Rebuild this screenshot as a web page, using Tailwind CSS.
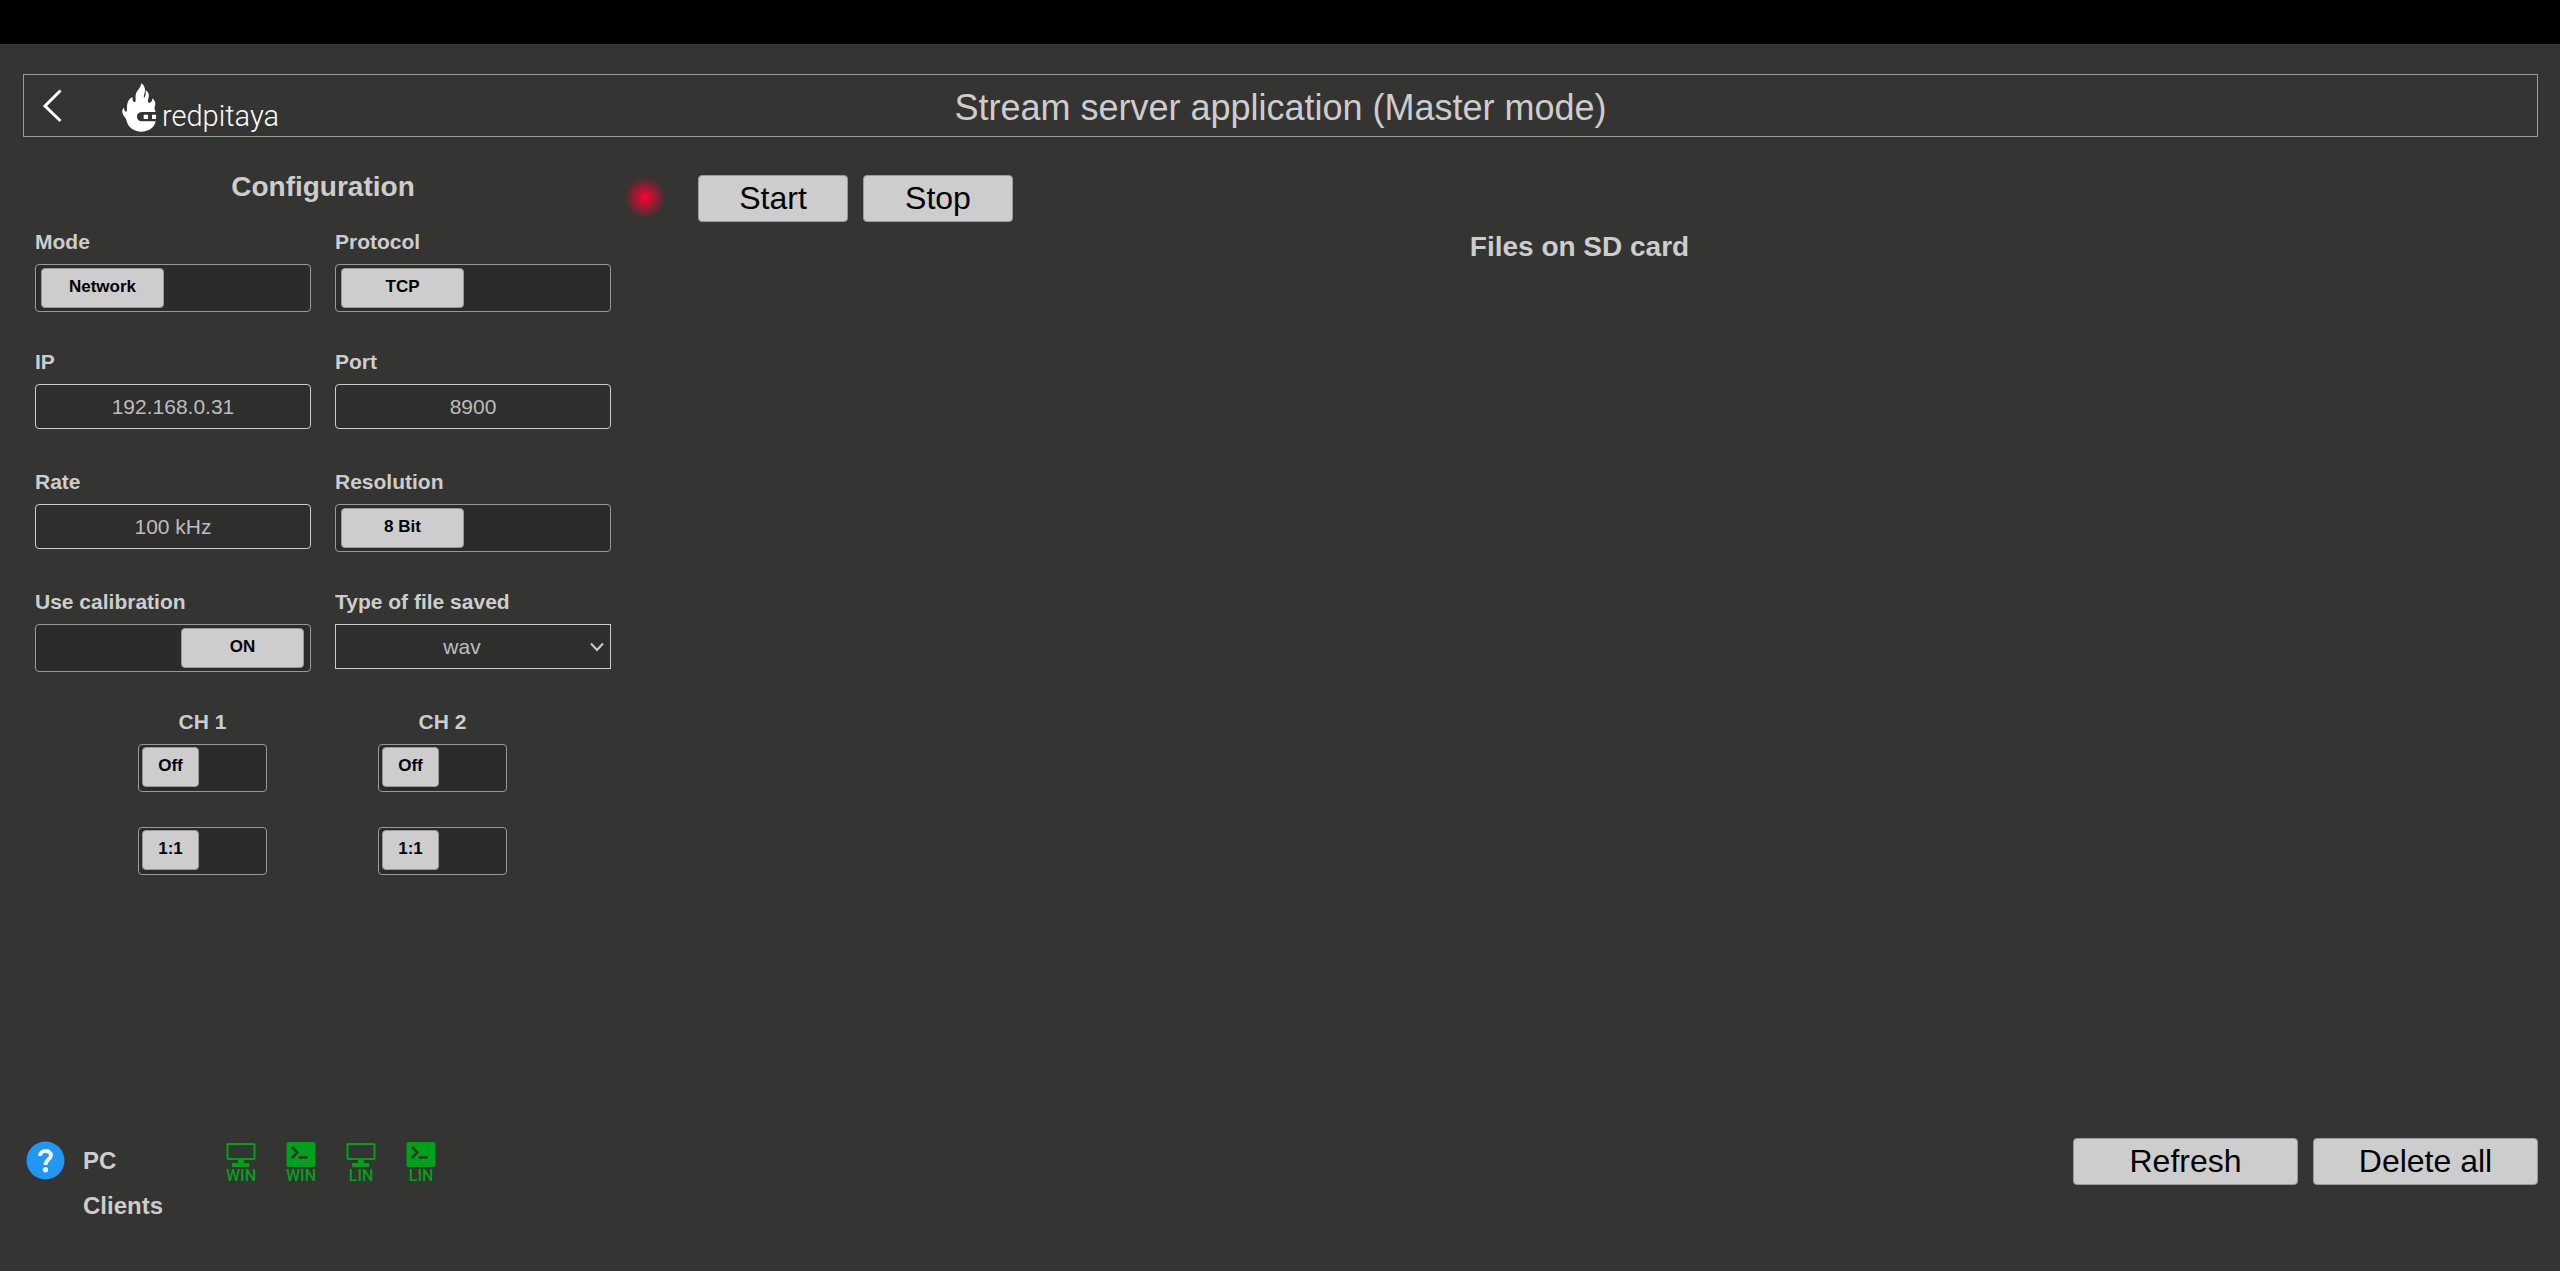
<!DOCTYPE html>
<html lang="en">
<head>
<meta charset="utf-8">
<title>Stream server application</title>
<script src="https://cdn.jsdelivr.net/npm/@tailwindcss/browser@4"></script>
</head>
<body class="flex min-h-screen flex-col bg-[#343432] font-['Liberation_Sans',Arial,sans-serif] text-[#cdcdcd]">
<div class="h-11 bg-black"></div>

<header class="mx-[22px] mt-[30px] ml-[23px] grid h-[63px] grid-cols-[1fr_auto_1fr] items-center border border-[#999]">
  <div class="flex items-center gap-[60px] pl-[18px]">
    <a href="#" aria-label="Back" class="block">
      <svg class="h-[34px] w-5" viewBox="0 0 20 34" fill="none" stroke="#fff" stroke-width="3"><path d="M18.500 1.500 L3 17 L18.500 32"/></svg>
    </a>
    <a href="#" class="flex items-center gap-[5px] pt-1 text-white" aria-label="redpitaya">
      <svg class="h-[49px] w-[35px]" viewBox="0 0 105 147" fill="#fff">
        <path fill-rule="evenodd" d="M58 1 C65 5 70 14 69 24 C68 32 64 38 66 45 C70 42 72 34 71 22 C79 26 82 35 80 43 C78 50 76 56 80 60 C87 60 91 55 91 46 C99 52 102 61 99 68 C96 75 99 80 101 87 L60 87 C49 88 45 94 45 101 C45 109 50 115 60 115 L101 115 C98 134 80 146 58 146 C35 146 18 133 13 112 C11 102 3 100 1 88 C0 82 2 77 6 74 C6 81 9 86 13 87 C17 80 13 72 16 62 C18 53 24 45 32 42 C30 50 33 57 39 58 C44 52 38 42 42 32 C45 22 56 16 58 1 Z"/>
        <path d="M65 95h13v13h-13z M90 95h12v13h-12z"/>
      </svg>
      <span class="pt-4 font-['Roboto',sans-serif] text-[29px] leading-8 font-light">redpitaya</span>
    </a>
  </div>
  <h1 class="pt-1 text-4xl leading-10">Stream server application (Master mode)</h1>
</header>

<main class="flex flex-1 items-start pl-[35px]">
  <section class="w-[576px] shrink-0 pt-[30px]">
    <h2 class="mb-[21px] text-center text-[28px] leading-10 font-bold">Configuration</h2>
    <div class="grid auto-rows-[120px] grid-cols-2 gap-x-6 text-[21px]">
      <div>
        <label for="mode" class="mb-2 block leading-7 font-bold">Mode</label>
        <div class="grid h-12">
          <input id="mode" type="checkbox" class="[grid-area:1/1] appearance-none rounded border border-[#999] bg-[#2b2b2a]">
          <span class="pointer-events-none [grid-area:1/1] m-1 ml-1.5 w-[123px] rounded border border-[#999] bg-[#cdcdcd] text-center text-[17px] leading-9 font-bold text-black">Network</span>
        </div>
      </div>
      <div>
        <label for="protocol" class="mb-2 block leading-7 font-bold">Protocol</label>
        <div class="grid h-12">
          <input id="protocol" type="checkbox" class="[grid-area:1/1] appearance-none rounded border border-[#999] bg-[#2b2b2a]">
          <span class="pointer-events-none [grid-area:1/1] m-1 ml-1.5 w-[123px] rounded border border-[#999] bg-[#cdcdcd] text-center text-[17px] leading-9 font-bold text-black">TCP</span>
        </div>
      </div>
      <div>
        <label for="ip" class="mb-2 block leading-7 font-bold">IP</label>
        <input id="ip" type="text" value="192.168.0.31" class="h-[45px] w-full rounded border border-[#ccc] bg-[#2e2e2d] text-center text-[#bdbdbd]">
      </div>
      <div>
        <label for="port" class="mb-2 block leading-7 font-bold">Port</label>
        <input id="port" type="text" value="8900" class="h-[45px] w-full rounded border border-[#ccc] bg-[#2e2e2d] text-center text-[#bdbdbd]">
      </div>
      <div>
        <label for="rate" class="mb-2 block leading-7 font-bold">Rate</label>
        <input id="rate" type="text" value="100 kHz" class="h-[45px] w-full rounded border border-[#ccc] bg-[#2e2e2d] text-center text-[#bdbdbd]">
      </div>
      <div>
        <label for="resolution" class="mb-2 block leading-7 font-bold">Resolution</label>
        <div class="grid h-12">
          <input id="resolution" type="checkbox" class="[grid-area:1/1] appearance-none rounded border border-[#999] bg-[#2b2b2a]">
          <span class="pointer-events-none [grid-area:1/1] m-1 ml-1.5 w-[123px] rounded border border-[#999] bg-[#cdcdcd] text-center text-[17px] leading-9 font-bold text-black">8 Bit</span>
        </div>
      </div>
      <div>
        <label for="calibration" class="mb-2 block leading-7 font-bold">Use calibration</label>
        <div class="grid h-12">
          <input id="calibration" type="checkbox" checked class="[grid-area:1/1] appearance-none rounded border border-[#999] bg-[#2b2b2a]">
          <span class="pointer-events-none [grid-area:1/1] m-1 mr-[7px] w-[123px] justify-self-end rounded border border-[#999] bg-[#cdcdcd] text-center text-[17px] leading-9 font-bold text-black">ON</span>
        </div>
      </div>
      <div>
        <label for="filetype" class="mb-2 block leading-7 font-bold">Type of file saved</label>
        <div class="grid h-[45px] items-center">
          <select id="filetype" class="[grid-area:1/1] h-full appearance-none border border-[#ccc] bg-[#2e2e2d] pr-[22px] text-center text-[#bdbdbd]"><option>wav</option></select>
          <svg class="pointer-events-none [grid-area:1/1] mr-[7px] h-2.5 w-3.5 justify-self-end" viewBox="0 0 14 10" fill="none" stroke="#ccc" stroke-width="2"><path d="M1 1.500 L7 8 L13 1.500"/></svg>
        </div>
      </div>
    </div>
    <div class="flex justify-center gap-[111px] pr-px text-[21px]">
      <div class="w-[129px] text-center">
        <label for="ch1" class="mb-2 block leading-7 font-bold">CH 1</label>
        <div class="mb-[35px] grid h-12">
          <input id="ch1" type="checkbox" class="[grid-area:1/1] appearance-none rounded border border-[#999] bg-[#2b2b2a]">
          <span class="pointer-events-none [grid-area:1/1] mx-1 mt-[3px] h-10 w-[57px] rounded border border-[#999] bg-[#cdcdcd] text-[17px] leading-9 font-bold text-black">Off</span>
        </div>
        <div class="grid h-12">
          <input aria-label="CH 1 attenuator" type="checkbox" class="[grid-area:1/1] appearance-none rounded border border-[#999] bg-[#2b2b2a]">
          <span class="pointer-events-none [grid-area:1/1] mx-1 mt-[3px] h-10 w-[57px] rounded border border-[#999] bg-[#cdcdcd] text-[17px] leading-9 font-bold text-black">1:1</span>
        </div>
      </div>
      <div class="w-[129px] text-center">
        <label for="ch2" class="mb-2 block leading-7 font-bold">CH 2</label>
        <div class="mb-[35px] grid h-12">
          <input id="ch2" type="checkbox" class="[grid-area:1/1] appearance-none rounded border border-[#999] bg-[#2b2b2a]">
          <span class="pointer-events-none [grid-area:1/1] mx-1 mt-[3px] h-10 w-[57px] rounded border border-[#999] bg-[#cdcdcd] text-[17px] leading-9 font-bold text-black">Off</span>
        </div>
        <div class="grid h-12">
          <input aria-label="CH 2 attenuator" type="checkbox" class="[grid-area:1/1] appearance-none rounded border border-[#999] bg-[#2b2b2a]">
          <span class="pointer-events-none [grid-area:1/1] mx-1 mt-[3px] h-10 w-[57px] rounded border border-[#999] bg-[#cdcdcd] text-[17px] leading-9 font-bold text-black">1:1</span>
        </div>
      </div>
    </div>
  </section>

  <section class="flex flex-1 flex-col pt-[38px] pl-2.5">
    <div class="flex gap-[15px]">
      <div class="mr-3.5 h-[45px] w-12 bg-[radial-gradient(circle,#ff0033_0px,#ff003300_21px)]"></div>
      <button class="h-[47px] w-[150px] rounded border border-[#999] bg-[#cdcdcd] pb-0.5 text-[32px] leading-10 text-black">Start</button>
      <button class="h-[47px] w-[150px] rounded border border-[#999] bg-[#cdcdcd] pb-0.5 text-[32px] leading-10 text-black">Stop</button>
    </div>
    <h2 class="mt-[5px] pr-[22px] text-center text-[28px] leading-10 font-bold">Files on SD card</h2>
  </section>
</main>

<footer class="flex items-start justify-between pr-[22px] pb-[43px] pl-[26px]">
  <div class="flex items-start">
    <button aria-label="Help" class="mt-[3px] mr-[18px] size-[39px]">
      <svg class="size-full" viewBox="0 0 39 39" fill="none"><circle cx="19.500" cy="19.500" r="19" fill="#2196f3"/><path d="M14 15 C14 8.500 25 8.500 25 14.300 C25 18.300 19.500 18.300 19.500 24" stroke="#e6f2fd" stroke-width="4"/><circle cx="19.500" cy="28.800" r="2.700" fill="#e6f2fd"/></svg>
    </button>
    <p class="w-[138px] text-2xl leading-[45px] font-bold">PC<br>Clients</p>
    <nav class="flex gap-5 pt-1 font-['Roboto',sans-serif] text-base leading-4 font-medium text-[#00a01a]">
      <a href="#" class="flex w-10 flex-col items-center">
        <svg class="h-[26px] w-[30px]" viewBox="0 0 30 26" fill="currentColor"><path fill-rule="evenodd" d="M2 1h26q1.500 0 1.500 1.500v14q0 1.500 -1.500 1.500h-10v3h5v4h-17v-4h6v-3h-10q-1.500 0 -1.500 -1.500v-14q0 -1.500 1.500 -1.500z M2.500 3v13h25v-13z"/></svg>WIN</a>
      <a href="#" class="flex w-10 flex-col items-center">
        <svg class="h-[26px] w-[30px]" viewBox="0 0 30 26"><rect x=".500" width="29" height="25" rx="2" fill="currentColor"/><path d="M6 5 L11.500 10.500 L6 16 M12.500 15.500h9" fill="none" stroke="#343432" stroke-width="2.500"/></svg>WIN</a>
      <a href="#" class="flex w-10 flex-col items-center">
        <svg class="h-[26px] w-[30px]" viewBox="0 0 30 26" fill="currentColor"><path fill-rule="evenodd" d="M2 1h26q1.500 0 1.500 1.500v14q0 1.500 -1.500 1.500h-10v3h5v4h-17v-4h6v-3h-10q-1.500 0 -1.500 -1.500v-14q0 -1.500 1.500 -1.500z M2.500 3v13h25v-13z"/></svg>LIN</a>
      <a href="#" class="flex w-10 flex-col items-center">
        <svg class="h-[26px] w-[30px]" viewBox="0 0 30 26"><rect x=".500" width="29" height="25" rx="2" fill="currentColor"/><path d="M6 5 L11.500 10.500 L6 16 M12.500 15.500h9" fill="none" stroke="#343432" stroke-width="2.500"/></svg>LIN</a>
    </nav>
  </div>
  <div class="flex gap-[15px]">
    <button class="h-[47px] w-[225px] rounded border border-[#999] bg-[#cdcdcd] pb-0.5 text-[32px] leading-10 text-black">Refresh</button>
    <button class="h-[47px] w-[225px] rounded border border-[#999] bg-[#cdcdcd] pb-0.5 text-[32px] leading-10 text-black">Delete all</button>
  </div>
</footer>
</body>
</html>
